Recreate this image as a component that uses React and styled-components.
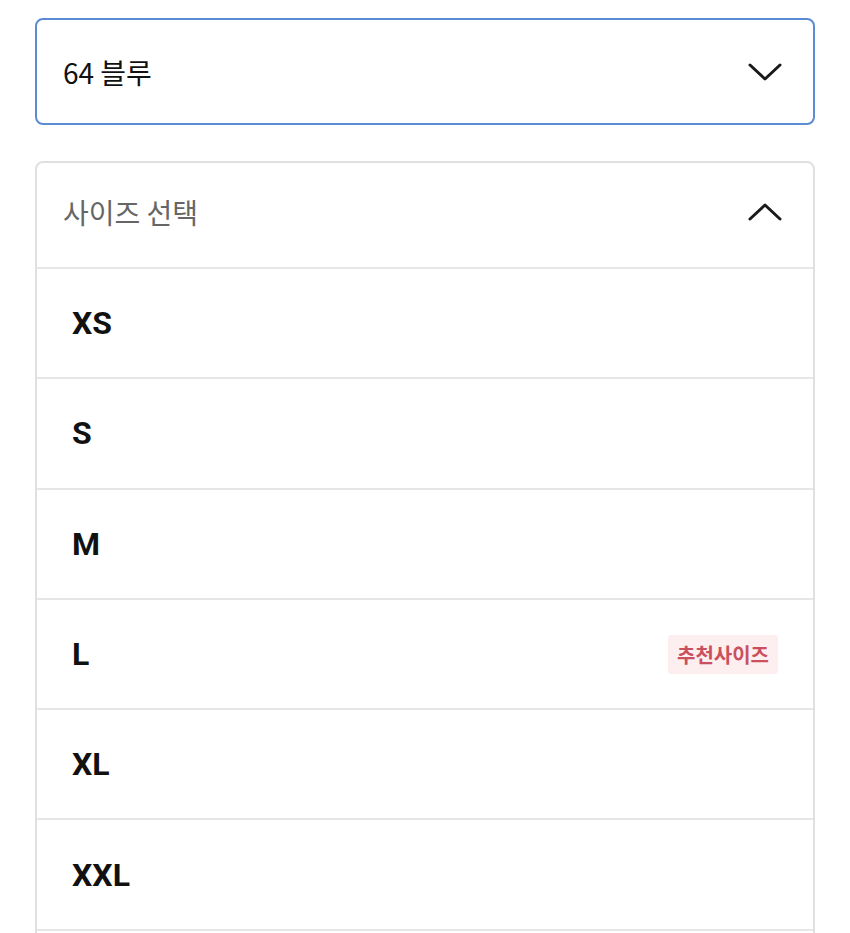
import React from "react";
import styled, { createGlobalStyle } from "styled-components";

const sizes = [
  { label: "XS" },
  { label: "S" },
  { label: "M" },
  { label: "L", recommended: true },
  { label: "XL" },
  { label: "XXL" },
];

const Chevron = ({ up }) => (
  <svg width="36" height="20" viewBox="0 0 36 20" fill="none">
    <path
      d={up ? "M3 17 L18 3 L33 17" : "M3 3 L18 17 L33 3"}
      stroke="#1a1a1a"
      strokeWidth="3"
      strokeLinecap="round"
      strokeLinejoin="round"
    />
  </svg>
);

const App = () => {
  return (
    <Page>
      <GlobalStyle />
      <ColorSelect>
        <SelectText>64 블루</SelectText>
        <Chevron />
      </ColorSelect>

      <SizePanel>
        <PanelHeader>
          <HeaderText>사이즈 선택</HeaderText>
          <Chevron up />
        </PanelHeader>
        {sizes.map((size) => (
          <SizeRow key={size.label}>
            <SizeLabel>{size.label}</SizeLabel>
            {size.recommended && <Badge>추천사이즈</Badge>}
          </SizeRow>
        ))}
        <RowEnd />
      </SizePanel>
    </Page>
  );
};

export default App;

const GlobalStyle = createGlobalStyle`
  body {
    margin: 0;
    background: #fff;
    font-family: Roboto, "Noto Sans CJK KR", sans-serif;
  }
`;

const Page = styled.div`
  width: 850px;
  height: 933px;
  overflow: hidden;
  padding: 18px 35px 0;
  box-sizing: border-box;
  display: flex;
  flex-direction: column;
  gap: 36px;
`;

const ColorSelect = styled.div`
  height: 107px;
  flex-shrink: 0;
  box-sizing: border-box;
  border: 2px solid #5b8bd2;
  border-radius: 8px;
  display: flex;
  align-items: center;
  justify-content: space-between;
  padding: 0 30px 0 26px;
`;

const SelectText = styled.span`
  font-family: "Noto Sans CJK KR", sans-serif;
  font-size: 28px;
  color: #111;
`;

const SizePanel = styled.div`
  border: 2px solid #e0e0e0;
  border-radius: 8px;
  flex-shrink: 0;
`;

const PanelHeader = styled.div`
  height: 104px;
  box-sizing: border-box;
  display: flex;
  align-items: center;
  justify-content: space-between;
  padding: 0 30px 6px 26px;
`;

const HeaderText = styled.span`
  font-family: "Noto Sans CJK KR", sans-serif;
  font-size: 28px;
  color: #666;
`;

const SizeRow = styled.div`
  height: 108.3px;
  border-top: 2px solid #e6e6e6;
  display: flex;
  align-items: center;
  justify-content: space-between;
  padding: 0 35px 0 35px;
`;

const RowEnd = styled.div`
  height: 40px;
  border-top: 2px solid #e6e6e6;
`;

const SizeLabel = styled.span`
  font-family: Roboto, sans-serif;
  font-weight: 700;
  font-size: 32px;
  color: #111;
`;

const Badge = styled.span`
  background: #fdeef0;
  color: #c9505c;
  font-family: "Noto Sans CJK KR", sans-serif;
  font-weight: 700;
  font-size: 20px;
  padding: 5px 9px;
  border-radius: 3px;
`;
